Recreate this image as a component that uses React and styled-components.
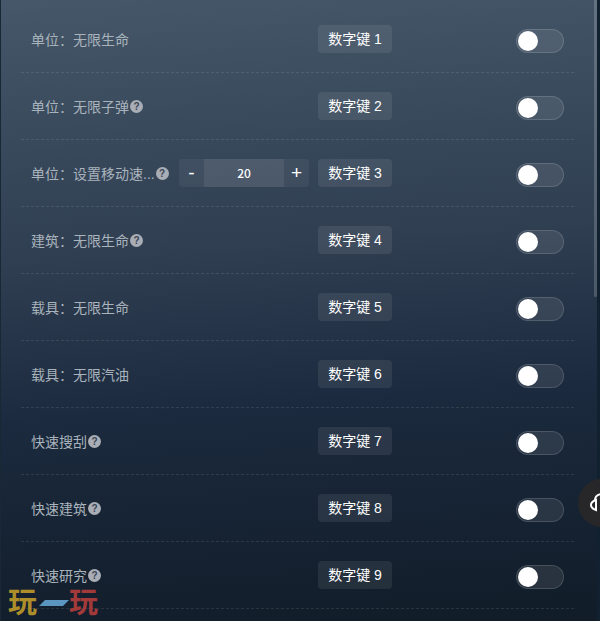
import React from 'react'
import styled, { createGlobalStyle } from 'styled-components'

const rows = [
  { label: '单位：无限生命', keyNum: 1 },
  { label: '单位：无限子弹', keyNum: 2, help: true },
  { label: '单位：设置移动速...', keyNum: 3, help: true, stepper: 20 },
  { label: '建筑：无限生命', keyNum: 4, help: true },
  { label: '载具：无限生命', keyNum: 5 },
  { label: '载具：无限汽油', keyNum: 6 },
  { label: '快速搜刮', keyNum: 7, help: true },
  { label: '快速建筑', keyNum: 8, help: true },
  { label: '快速研究', keyNum: 9, help: true },
]

function App() {
  return (
    <>
      <GlobalStyle />
      <Page>
        <LeftEdge />
        <List>
          {rows.map((row) => (
            <Row key={row.keyNum}>
              <LabelCell>
                <span>{row.label}</span>
                {row.help && <Help>?</Help>}
              </LabelCell>
              <StepperCell>
                {row.stepper && (
                  <Stepper>
                    <StepButton>-</StepButton>
                    <StepValue>{row.stepper}</StepValue>
                    <StepButton>+</StepButton>
                  </Stepper>
                )}
              </StepperCell>
              <KeyBadge>数字键 {row.keyNum}</KeyBadge>
              <Toggle>
                <Knob />
              </Toggle>
            </Row>
          ))}
        </List>
        <ScrollTrack>
          <ScrollThumb />
        </ScrollTrack>
        <RightEdge />
        <FloatButton>
          <svg width="24" height="24" viewBox="0 0 24 24" fill="none" stroke="#fff" strokeWidth="2">
            <path d="M5 9 C5 6 7 4 11 3" />
            <path d="M6 9 C3 10 1 12 1 14 C1 16 3 18 6 19 Z" />
          </svg>
        </FloatButton>
        <Logo>
          <LogoChar color="#ad8e2b">玩</LogoChar>
          <LogoDash />
          <LogoChar color="#a33a3a">玩</LogoChar>
        </Logo>
      </Page>
    </>
  )
}

export default App

const GlobalStyle = createGlobalStyle`
html, body {
    margin: 0;
    padding: 0;
    height: 100%;
    overflow: hidden;
    background: #0f1c2a;
}
body {
    font-family: "Liberation Sans", "Noto Sans CJK SC", sans-serif;
}
`

const Page = styled.div`
position: relative;
display: flex;
width: 600px;
height: 621px;
overflow: hidden;
background: linear-gradient(176deg, #455769 0%, #2f3e51 40%, #1b2a3e 64%, #111c28 100%);
`

const LeftEdge = styled.div`
width: 1px;
background: #1a2836;
`

const List = styled.div`
flex: 1;
padding: 6px 20px 0 20px;
`

const Row = styled.div`
display: grid;
grid-template-columns: 148px 139px 74px 1fr;
align-items: center;
box-sizing: border-box;
height: 67px;
padding: 0 10px 1px;
border-bottom: 1px dashed rgba(255, 255, 255, 0.1);
`

const LabelCell = styled.div`
display: flex;
align-items: center;
gap: 1px;
color: #a9b3bc;
font-size: 14px;
white-space: nowrap;
`

const Help = styled.span`
flex: none;
width: 13px;
height: 13px;
margin-top: 1px;
border-radius: 50%;
background: #a9adb5;
color: #3a4656;
font: bold 10px/13px "Liberation Sans", sans-serif;
text-align: center;
`

const StepperCell = styled.div`
min-width: 0;
`

const Stepper = styled.div`
display: flex;
width: 130px;
height: 28px;
border-radius: 4px;
overflow: hidden;
background: rgba(255, 255, 255, 0.05);
`

const StepButton = styled.div`
width: 25px;
color: #fff;
font: 19px/28px "Liberation Sans", sans-serif;
text-align: center;
`

const StepValue = styled.div`
flex: 1;
background: rgba(255, 255, 255, 0.07);
color: #fff;
font: 500 12px/27px "Noto Sans CJK SC", "Liberation Sans", sans-serif;
text-align: center;
`

const KeyBadge = styled.div`
height: 28px;
border-radius: 4px;
background: rgba(255, 255, 255, 0.08);
color: #fff;
font-size: 14px;
line-height: 28px;
text-align: center;
white-space: nowrap;
`

const Toggle = styled.div`
justify-self: end;
box-sizing: border-box;
width: 48px;
height: 24px;
margin-top: 4px;
padding: 1px;
border: 1px solid rgba(255, 255, 255, 0.14);
border-radius: 12px;
background: rgba(255, 255, 255, 0.09);
`

const Knob = styled.div`
width: 20px;
height: 20px;
border-radius: 50%;
background: #fff;
`

const ScrollTrack = styled.div`
width: 3px;
`

const ScrollThumb = styled.div`
height: 297px;
background: rgba(255, 255, 255, 0.18);
border-radius: 0 0 2px 2px;
`

const RightEdge = styled.div`
width: 3px;
background: #12212f;
`

const FloatButton = styled.div`
position: absolute;
top: 479px;
left: 578px;
width: 48px;
height: 48px;
border-radius: 50%;
background: #27272a;
display: flex;
align-items: center;
padding-left: 12px;
box-sizing: border-box;
`

const Logo = styled.div`
position: absolute;
left: 8px;
top: 585px;
display: flex;
align-items: center;
`

const LogoChar = styled.span`
width: 30px;
color: ${(props) => props.color};
font: bold 29px/30px "Noto Sans CJK SC", sans-serif;
`

const LogoDash = styled.div`
width: 24px;
height: 6px;
margin: 6px 3px 0 4px;
background: #5b96c0;
transform: skewX(-45deg);
`
